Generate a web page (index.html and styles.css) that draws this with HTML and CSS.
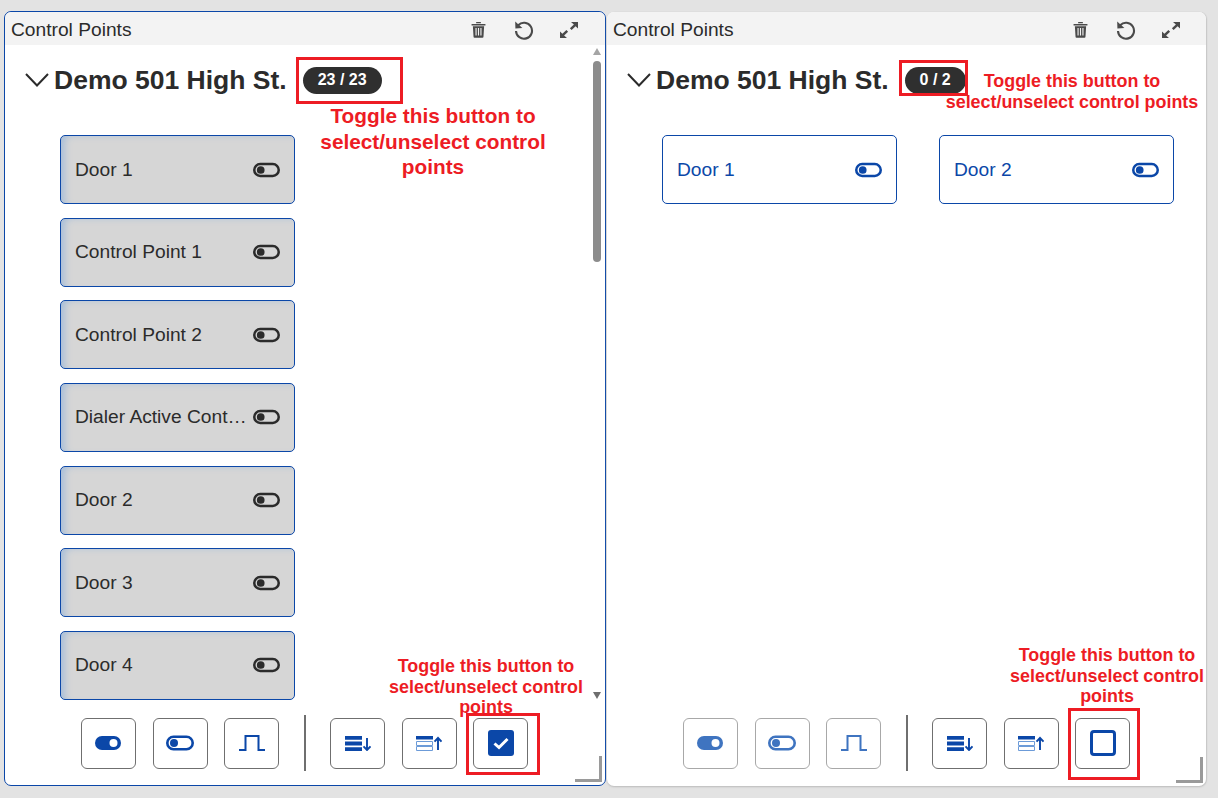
FILE: index.html
```html
<!DOCTYPE html>
<html lang="en">
<head>
<meta charset="utf-8">
<title>Control Points</title>
<link rel="stylesheet" href="styles.css">
</head>
<body>
<svg class="sprite" aria-hidden="true">
  <symbol id="i-trash" viewBox="0 0 16 18">
    <path d="M5.5 2.2V1h5v1.2M.6 3h14.8v1.8H.6zM2 5.6h12l-.7 11.2a1 1 0 0 1-1 1H3.7a1 1 0 0 1-1-1z" fill="currentColor"/>
    <path d="M5.4 7.5v8M8 7.5v8M10.6 7.5v8" stroke="#f3f3f3" stroke-width="1.2" fill="none"/>
  </symbol>
  <symbol id="i-undo" viewBox="0 0 20 20">
    <path d="M4.2 5.2A8 8 0 1 1 2 11" fill="none" stroke="currentColor" stroke-width="2.1"/>
    <path d="M1.2 1.4l.2 7.2 7-.6z" fill="currentColor"/>
  </symbol>
  <symbol id="i-expand" viewBox="0 0 18 16">
    <path d="M11 0h7v6.5l-2.4-2.3-4 3.8-1.7-1.7 4-3.8zM7 16H0V9.5l2.4 2.3 4-3.8 1.7 1.7-4 3.8z" fill="currentColor"/>
  </symbol>
  <symbol id="i-off" viewBox="0 0 28 16">
    <rect x="1.3" y="1.8" width="25.4" height="12.4" rx="6.2" fill="none" stroke="currentColor" stroke-width="2.6"/>
    <circle cx="8" cy="8" r="4" fill="currentColor"/>
  </symbol>
  <symbol id="i-on" viewBox="0 0 28 16">
    <rect x="0" y="1" width="26" height="14" rx="7" fill="currentColor"/>
    <circle cx="18.5" cy="8" r="4" fill="#fff"/>
  </symbol>
  <symbol id="i-pulse" viewBox="0 0 26 16">
    <path d="M0 15h6.500V1h13v14H26" fill="none" stroke="currentColor" stroke-width="2"/>
  </symbol>
  <symbol id="i-down" viewBox="0 0 26 15">
    <path d="M0 0h17v3.800H0zM0 5.600h17v3.800H0zM0 11.200h17V15H0z" fill="currentColor"/>
    <path d="M22 2v12M18.500 10.300l3.500 3.700 3.500-3.700" fill="none" stroke="currentColor" stroke-width="1.900"/>
  </symbol>
  <symbol id="i-up" viewBox="0 0 26 15">
    <path d="M0 0h17v3.500H0z" fill="currentColor"/>
    <path d="M.5 5.500h16v4h-16zM.5 10.500h16v4h-16z" fill="none" stroke="#6c9bd8" stroke-width="1"/>
    <path d="M22 14V2M18.500 5.700L22 2l3.500 3.700" fill="none" stroke="currentColor" stroke-width="1.900"/>
  </symbol>
  <symbol id="i-checked" viewBox="0 0 26 26">
    <rect width="26" height="26" rx="3" fill="currentColor"/>
    <path d="M6.500 13.500l4.500 4 8.500-8.500" fill="none" stroke="#fff" stroke-width="3"/>
  </symbol>
  <symbol id="i-empty" viewBox="0 0 26 26">
    <rect x="1.500" y="1.500" width="23" height="23" rx="2.500" fill="none" stroke="currentColor" stroke-width="3"/>
  </symbol>
</svg>

<main class="desktop">
  <section class="panel panel-active">
    <header class="panel-head">
      <span class="panel-title">Control Points</span>
      <div class="head-tools">
        <svg class="tool tool-trash"><use href="#i-trash"/></svg>
        <svg class="tool tool-undo"><use href="#i-undo"/></svg>
        <svg class="tool tool-expand"><use href="#i-expand"/></svg>
      </div>
    </header>
    <div class="panel-body">
      <div class="group-head">
        <svg class="chevron" viewBox="0 0 24 14"><path d="M1 1l11 11.5L23 1" fill="none" stroke="currentColor" stroke-width="2"/></svg>
        <h2 class="group-name">Demo 501 High St.</h2>
        <span class="count count-wide">23 / 23</span>
      </div>
      <ul class="cards cards-column">
        <li class="card card-selected"><span class="card-label">Door 1</span><svg class="card-toggle"><use href="#i-off"/></svg></li>
        <li class="card card-selected"><span class="card-label">Control Point 1</span><svg class="card-toggle"><use href="#i-off"/></svg></li>
        <li class="card card-selected"><span class="card-label">Control Point 2</span><svg class="card-toggle"><use href="#i-off"/></svg></li>
        <li class="card card-selected"><span class="card-label">Dialer Active Contact</span><svg class="card-toggle"><use href="#i-off"/></svg></li>
        <li class="card card-selected"><span class="card-label">Door 2</span><svg class="card-toggle"><use href="#i-off"/></svg></li>
        <li class="card card-selected"><span class="card-label">Door 3</span><svg class="card-toggle"><use href="#i-off"/></svg></li>
        <li class="card card-selected"><span class="card-label">Door 4</span><svg class="card-toggle"><use href="#i-off"/></svg></li>
      </ul>
      <div class="scrollbar">
        <span class="arrow arrow-up"></span>
        <span class="thumb"></span>
        <span class="arrow arrow-down"></span>
      </div>
    </div>
    <footer class="panel-foot">
      <button class="btn"><svg class="ico ico-toggle"><use href="#i-on"/></svg></button>
      <button class="btn"><svg class="ico ico-toggle"><use href="#i-off"/></svg></button>
      <button class="btn"><svg class="ico ico-pulse"><use href="#i-pulse"/></svg></button>
      <span class="divider"></span>
      <button class="btn"><svg class="ico ico-sort"><use href="#i-down"/></svg></button>
      <button class="btn"><svg class="ico ico-sort"><use href="#i-up"/></svg></button>
      <button class="btn"><svg class="ico ico-check"><use href="#i-checked"/></svg></button>
    </footer>
    <span class="resize"></span>
    <span class="mark mark-a"></span>
    <span class="mark mark-b"></span>
    <p class="note note-a">Toggle this button to<br>select/unselect control<br>points</p>
    <p class="note note-b">Toggle this button to<br>select/unselect control<br>points</p>
  </section>

  <section class="panel panel-idle">
    <header class="panel-head">
      <span class="panel-title">Control Points</span>
      <div class="head-tools">
        <svg class="tool tool-trash"><use href="#i-trash"/></svg>
        <svg class="tool tool-undo"><use href="#i-undo"/></svg>
        <svg class="tool tool-expand"><use href="#i-expand"/></svg>
      </div>
    </header>
    <div class="panel-body">
      <div class="group-head">
        <svg class="chevron" viewBox="0 0 24 14"><path d="M1 1l11 11.5L23 1" fill="none" stroke="currentColor" stroke-width="2"/></svg>
        <h2 class="group-name">Demo 501 High St.</h2>
        <span class="count count-narrow">0 / 2</span>
      </div>
      <ul class="cards cards-row">
        <li class="card"><span class="card-label">Door 1</span><svg class="card-toggle"><use href="#i-off"/></svg></li>
        <li class="card"><span class="card-label">Door 2</span><svg class="card-toggle"><use href="#i-off"/></svg></li>
      </ul>
    </div>
    <footer class="panel-foot">
      <button class="btn btn-muted"><svg class="ico ico-toggle"><use href="#i-on"/></svg></button>
      <button class="btn btn-muted"><svg class="ico ico-toggle"><use href="#i-off"/></svg></button>
      <button class="btn btn-muted"><svg class="ico ico-pulse"><use href="#i-pulse"/></svg></button>
      <span class="divider"></span>
      <button class="btn"><svg class="ico ico-sort"><use href="#i-down"/></svg></button>
      <button class="btn"><svg class="ico ico-sort"><use href="#i-up"/></svg></button>
      <button class="btn"><svg class="ico ico-check"><use href="#i-empty"/></svg></button>
    </footer>
    <span class="resize"></span>
    <span class="mark mark-c"></span>
    <span class="mark mark-d"></span>
    <p class="note note-c">Toggle this button to<br>select/unselect control points</p>
    <p class="note note-d">Toggle this button to<br>select/unselect control<br>points</p>
  </section>
</main>
</body>
</html>
```

FILE: styles.css
```css
* { box-sizing: border-box; }

html, body {
  margin: 0;
  height: 100%;
  overflow: hidden;
}

body {
  background: #e3e3e3;
  color: #2b2b2b;
  font-family: "Liberation Sans", Arial, sans-serif;
}

.sprite {
  position: absolute;
  width: 0;
  height: 0;
}

.desktop {
  display: flex;
  align-items: flex-start;
  padding: 11px 0 0 4px;
}

.panel {
  position: relative;
  display: flex;
  flex-direction: column;
  background: #fff;
  border-radius: 7px;
}

.panel-active {
  width: 602px;
  height: 775px;
  margin-right: 1px;
  border: 1px solid #0b47a8;
}

.panel-idle {
  width: 599px;
  height: 774px;
  margin-top: 1px;
  box-shadow: 0 1px 2px #bbb, 1px 0 1px #ccc;
}

.panel-head {
  display: flex;
  align-items: center;
  flex: none;
  height: 33px;
  padding: 2px 27px 0 6px;
  background: #f3f3f3;
  border-radius: 7px 7px 0 0;
}

.panel-idle .panel-head {
  padding-right: 26px;
}

.panel-title {
  font-size: 19.2px;
}

.head-tools {
  display: flex;
  align-items: center;
  margin-left: auto;
  color: #4a4a4a;
}

.tool { display: block; }
.tool-trash { width: 15px; height: 17px; margin-right: 28px; }
.tool-undo { width: 20px; height: 20px; margin-right: 26px; }
.tool-expand { width: 18px; height: 16px; }

.panel-body {
  position: relative;
  flex: 1;
  min-height: 0;
  overflow: hidden;
  padding: 16px 0 0 20px;
}

.group-head {
  display: flex;
  align-items: center;
  height: 38px;
  margin-bottom: 36px;
}

.chevron {
  flex: none;
  width: 24px;
  height: 14px;
  margin-right: 5px;
}

.group-name {
  margin: 0;
  font-size: 26.5px;
  font-weight: 700;
}

.count {
  display: flex;
  align-items: center;
  justify-content: center;
  height: 27px;
  border-radius: 14px;
  background: #2f2f2f;
  color: #fff;
  font-size: 16px;
  font-weight: 700;
}

.count-wide { width: 79px; margin-left: 16px; }
.count-narrow { width: 61px; margin-left: 16px; }

.cards {
  margin: 0;
  padding: 0 0 0 35px;
  list-style: none;
}

.cards-column {
  display: flex;
  flex-direction: column;
  gap: 13.67px;
}

.cards-row {
  display: flex;
  gap: 42px;
}

.card {
  display: flex;
  align-items: center;
  flex: none;
  width: 235px;
  height: 69px;
  padding: 0 14px;
  border: 1px solid #0b47a8;
  border-radius: 5px;
  color: #0b47a8;
  font-size: 19.2px;
}

.card-selected {
  background: #d6d6d6;
  color: #2b2b2b;
  box-shadow: inset 7px 2px 7px -3px #a9bfd9;
}

.card-label {
  flex: 1;
  min-width: 0;
  overflow: hidden;
  white-space: nowrap;
  text-overflow: ellipsis;
}

.card-toggle {
  flex: none;
  width: 27px;
  height: 16px;
  margin-left: 4px;
}

.scrollbar {
  position: absolute;
  top: 3px;
  right: 2px;
  bottom: 0;
  display: flex;
  flex-direction: column;
  align-items: center;
  width: 12px;
}

.thumb {
  width: 8px;
  height: 201px;
  margin-top: 6px;
  border-radius: 4px;
  background: #8c8c8c;
}

.arrow {
  width: 0;
  height: 0;
  border-left: 4.5px solid transparent;
  border-right: 4.5px solid transparent;
}

.arrow-up { border-bottom: 7px solid #a5a5a5; }
.arrow-down { border-top: 7px solid #6e6e6e; margin-top: auto; margin-bottom: 6px; }

.panel-foot {
  display: flex;
  align-items: center;
  flex: none;
  gap: 16.5px;
  height: 80px;
  padding: 0 0 4px 76px;
  color: #0b47a8;
}

.panel-idle .panel-foot {
  padding-bottom: 6px;
}

.btn {
  display: flex;
  align-items: center;
  justify-content: center;
  flex: none;
  width: 55px;
  height: 51px;
  padding: 0;
  background: #fff;
  border: 1px solid #6f6f6f;
  border-radius: 6px;
  color: inherit;
}

.btn-muted {
  border-color: #a8a8a8;
  color: #3f74c0;
}

.ico { display: block; }
.ico-toggle { width: 28px; height: 16px; }
.ico-pulse { width: 26px; height: 16px; }
.ico-sort { width: 26px; height: 15px; }
.ico-check { width: 26px; height: 26px; }

.divider {
  flex: none;
  width: 2px;
  height: 56px;
  margin: 0 8px;
  background: #6f6f6f;
}

.resize {
  position: absolute;
  right: 3px;
  bottom: 3px;
  width: 27px;
  height: 26px;
  border-right: 3px solid #9a9a9a;
  border-bottom: 3px solid #9a9a9a;
  clip-path: polygon(24px 0, 27px 0, 27px 26px, 0 26px, 0 23px, 24px 23px);
}

.mark {
  position: absolute;
  border: 3px solid #ed1c24;
}

.mark-a { left: 291px; top: 45px; width: 107px; height: 47px; }
.mark-b { left: 461px; top: 701px; width: 74px; height: 62px; }
.mark-c { left: 292px; top: 48px; width: 69px; height: 36px; }
.mark-d { left: 461px; top: 696px; width: 72px; height: 72px; }

.note {
  position: absolute;
  margin: 0;
  color: #ed1c24;
  font-weight: 700;
  text-align: center;
  white-space: nowrap;
  transform: translateX(-50%);
}

.note-a { left: 428px; top: 91px; font-size: 20.8px; line-height: 25.5px; }
.note-b { left: 481px; top: 644px; font-size: 17.9px; line-height: 20.5px; }
.note-c { left: 465px; top: 59px; font-size: 17.9px; line-height: 20.5px; }
.note-d { left: 500px; top: 633px; font-size: 17.9px; line-height: 20.5px; }
```
